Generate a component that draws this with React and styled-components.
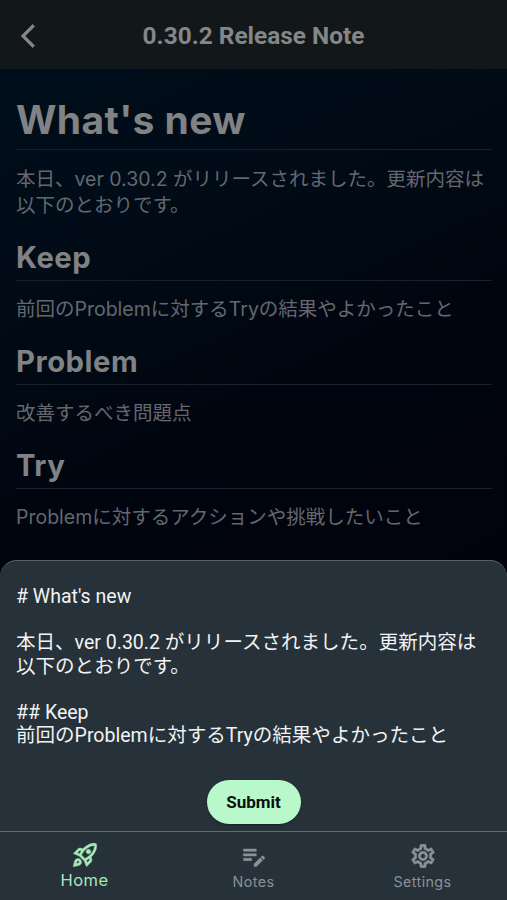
import React from 'react'
import styled, { createGlobalStyle } from 'styled-components'
import {
  MdArrowBackIosNew,
  MdOutlineRocketLaunch,
  MdEditNote,
  MdOutlineSettings,
} from 'react-icons/md'

const note = `# What's new

本日、ver 0.30.2 がリリースされました。更新内容は以下のとおりです。

## Keep
前回のProblemに対するTryの結果やよかったこと`

const App = () => {
  return (
    <>
      <GlobalStyle />
      <Screen>
        <Header>
          <BackButton aria-label="Back">
            <MdArrowBackIosNew />
          </BackButton>
          <HeaderTitle>0.30.2 Release Note</HeaderTitle>
        </Header>

        <Preview>
          <Title>What's new</Title>
          <Text>本日、ver 0.30.2 がリリースされました。更新内容は以下のとおりです。</Text>
          <Heading>Keep</Heading>
          <Text>前回のProblemに対するTryの結果やよかったこと</Text>
          <Heading>Problem</Heading>
          <Text>改善するべき問題点</Text>
          <Heading>Try</Heading>
          <Text>Problemに対するアクションや挑戦したいこと</Text>
        </Preview>

        <Sheet>
          <Editor>{note}</Editor>
          <SubmitButton>Submit</SubmitButton>
        </Sheet>

        <Nav>
          <NavItem $active>
            <MdOutlineRocketLaunch />
            <span>Home</span>
          </NavItem>
          <NavItem>
            <MdEditNote />
            <span>Notes</span>
          </NavItem>
          <NavItem>
            <MdOutlineSettings />
            <span>Settings</span>
          </NavItem>
        </Nav>
      </Screen>
    </>
  )
}

const GlobalStyle = createGlobalStyle`
  * {
    box-sizing: border-box;
  }
  body {
    margin: 0;
    background: #263139;
  }
`

const Screen = styled.div`
  width: 100%;
  height: 900px;
  display: flex;
  flex-direction: column;
  overflow: hidden;
  background: linear-gradient(155deg, #000e1b 8%, #000b16 28%, #00040e 52%, #00030c 100%);
  font-family: Inter, 'Noto Sans CJK JP', sans-serif;
`

const Header = styled.header`
  flex: none;
  height: 69px;
  padding: 3px 14px 0;
  display: grid;
  grid-template-columns: 28px 1fr 28px;
  align-items: center;
  background: #121819;
  color: #848687;
`

const BackButton = styled.button`
  padding: 0 0 1px;
  border: 0;
  display: flex;
  background: none;
  color: inherit;

  svg {
    width: 28px;
    height: 28px;
    stroke-width: 0.4px;
  }
  path[fill='none'] {
    display: none;
  }
`

const HeaderTitle = styled.h1`
  margin: 0;
  text-align: center;
  font-family: Roboto, sans-serif;
  font-size: 24.4px;
  line-height: 28px;
  font-weight: 700;
`

const Preview = styled.main`
  flex: none;
  height: 491px;
  padding: 26px 15px 0 16px;
  color: #808284;
`

const Title = styled.h2`
  margin: 0 0 15.5px;
  height: 55px;
  border-bottom: 1px solid #16212b;
  font-size: 39px;
  line-height: 49px;
  font-weight: 700;
  letter-spacing: 0.4px;
`

const Heading = styled.h3`
  margin: 19.5px 0 15px;
  height: 43px;
  border-bottom: 1px solid #16212b;
  font-size: 29.25px;
  line-height: 39px;
  font-weight: 700;
  letter-spacing: 0.5px;
`

const Text = styled.p`
  margin: 0;
  font-size: 19.5px;
  line-height: 26.5px;
  color: #64686e;
`

const Sheet = styled.section`
  flex: none;
  height: 271px;
  padding: 24px 16px 7px;
  display: flex;
  flex-direction: column;
  align-items: center;
  justify-content: space-between;
  border-top: 1px solid #59636a;
  border-radius: 17px 17px 0 0;
  background: #263139;
`

const Editor = styled.div`
  width: 100%;
  white-space: pre-wrap;
  font-family: Roboto, 'Noto Sans CJK JP', sans-serif;
  font-size: 19.55px;
  line-height: 23.2px;
  color: #f1f3f4;
`

const SubmitButton = styled.button`
  width: 94px;
  height: 44px;
  padding: 0;
  border: 0;
  border-radius: 22px;
  background: #b9f8ca;
  color: #07100b;
  font-family: Roboto, sans-serif;
  font-size: 17px;
  font-weight: 700;
  box-shadow: 0 1px 2px rgba(0, 0, 0, 0.35);
`

const Nav = styled.nav`
  flex: none;
  height: 69px;
  display: grid;
  grid-template-columns: repeat(3, 1fr);
  border-top: 1px solid #626c73;
  background: #263139;
`

const NavItem = styled.a`
  padding-top: ${(p) => (p.$active ? '9px' : '10px')};
  display: flex;
  flex-direction: column;
  align-items: center;
  color: ${(p) => (p.$active ? '#a5e8b8' : '#8a9297')};
  font-size: ${(p) => (p.$active ? '16.5px' : '14.3px')};
  line-height: 23px;
  letter-spacing: 0.4px;

  svg {
    width: 28px;
    height: 28px;
    stroke-width: 0.4px;
  }
  /* bounding box path of the material icons */
  path[fill='none'] {
    display: none;
  }
`

export default App
